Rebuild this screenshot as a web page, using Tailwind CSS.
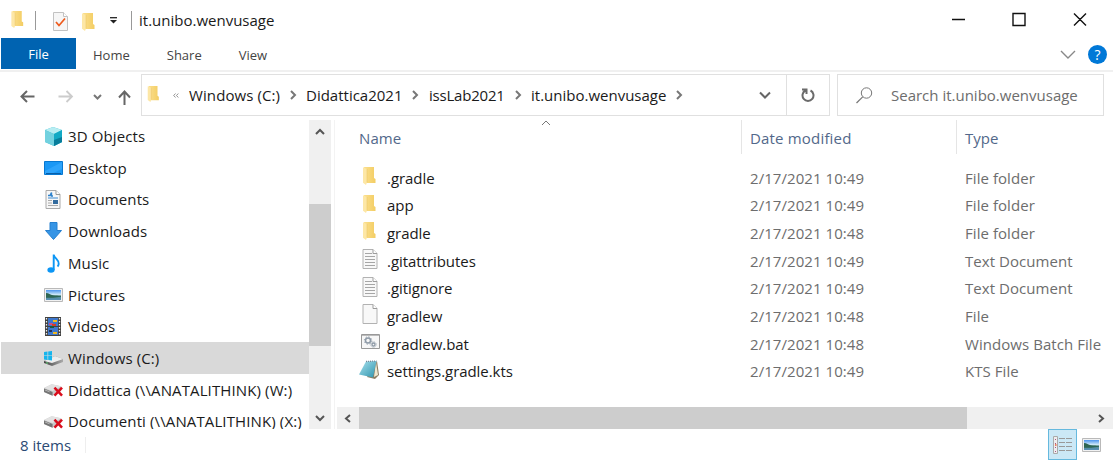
<!DOCTYPE html>
<html lang="en">
<head>
<meta charset="utf-8">
<title>it.unibo.wenvusage</title>
<script src="https://cdn.jsdelivr.net/npm/@tailwindcss/browser@4"></script>
</head>
<body class="w-[1113px] h-[461px] overflow-hidden bg-white font-['Open_Sans','Noto_Sans',sans-serif] text-[15px] text-[#1a1a1a] whitespace-nowrap">
<svg class="absolute size-0">
  <defs>
    <linearGradient id="gold" x1="0" x2="1"><stop offset="0" stop-color="#fbdf8d"/><stop offset="1" stop-color="#f3cd63"/></linearGradient>
    <linearGradient id="sky" x1="0" y1="0" x2="0" y2="1"><stop offset="0" stop-color="#4a94ee"/><stop offset=".5" stop-color="#d9effa"/><stop offset=".6" stop-color="#4e8a91"/><stop offset="1" stop-color="#5b91ba"/></linearGradient>
    <linearGradient id="note" x1="0" y1="0" x2="1" y2="1"><stop offset="0" stop-color="#a9e2ee"/><stop offset="1" stop-color="#2d93ad"/></linearGradient>
    <linearGradient id="disk" x1="0" x2="1"><stop offset="0" stop-color="#444"/><stop offset="1" stop-color="#aaa"/></linearGradient>
    <symbol id="folder" viewBox="0 0 13 18"><path d="M1 0h10v11l1.500 1v4H3z" fill="url(#gold)"/><path d="M0 .3 4 2v13.500l-1 2.500L0 15.800z" fill="#fde7a6"/><path d="M4 2v13.500" stroke="#e9c05d" stroke-width=".5"/></symbol>
    <symbol id="sheet" viewBox="0 0 16 20"><path d="M1 .5h10l4 4v15H1z" fill="#f8f8f8" stroke="#b2b2b2"/><path d="M11 .5v4h4" fill="#fff" stroke="#9c9c9c"/></symbol>
    <symbol id="text" viewBox="0 0 16 20"><use href="#sheet"/><path d="M3 4.500h7M3 7.500h10M3 10.500h10M3 13.500h10M3 16.500h10" stroke="#a6a6a6"/></symbol>
    <symbol id="picture" viewBox="0 0 19 14"><path d="M.5.500h18v13H.5z" fill="#f1f1f1" stroke="#b9b9b9"/><path d="M2 2h15v10H2z" fill="url(#sky)"/><path d="M2 5c3 0 4 2 7 2.200 3 .3 5 .5 8 .5v1c-6 1-10 1-15 1z" fill="#2e6653"/></symbol>
    <symbol id="netdisk" viewBox="0 0 20 15"><path d="M0 6 8 2l10 2v5l-9 5-9-4z" fill="#c9c9c9"/><path d="m0 6 8-4 10 2-9 5z" fill="#e3e3e3"/><path d="m0 6.500 9 3.500v4L0 10z" fill="#757575"/><path d="m1 8 5 2" stroke="#bbb"/><path d="m11 5.500 8 8.500m0-8.500L11 14" stroke="#d90d1c" stroke-width="2.600"/></symbol>
    <symbol id="crumb" viewBox="0 0 8 10"><path d="m2 1 4 4-4 4" fill="none" stroke="#777" stroke-width="2"/></symbol>
  </defs>
</svg>
<div class="flex flex-col h-[461px]">
  <!-- Title bar -->
  <header class="flex h-[38px] items-center pb-px">
    <svg class="ml-[11px] mt-0.5 w-[13px] h-[17px]"><use href="#folder"/></svg>
    <div class="ml-[11px] mt-1 w-px h-[19px] bg-[#999]"></div>
    <svg class="ml-[17px] mt-1.5 w-[15px] h-[19px]" viewBox="0 0 15 19"><path d="M.5.500h10l4 4v14H.5z" fill="#f6f6f6" stroke="#c2c2c2"/><path d="M10.500.500v4h4" fill="#fff" stroke="#c2c2c2"/><path d="m3 10 3 3.500 6-7" fill="none" stroke="#ee5a1c" stroke-width="1.700"/></svg>
    <svg class="ml-[14px] mt-1.5 w-[13px] h-[18px]"><use href="#folder"/></svg>
    <svg class="ml-[14px] mt-1 w-[9px] h-[7px]" viewBox="0 0 9 7"><path d="M1 .7h7" stroke="#222" stroke-width="1.300"/><path d="M1 3h7L4.500 6.500z" fill="#222"/></svg>
    <div class="ml-[13px] mt-1 w-px h-[19px] bg-[#999]"></div>
    <div class="ml-[7px] mt-1">it.unibo.wenvusage</div>
    <svg class="ml-auto mr-[26px] w-[136px] h-4" viewBox="0 0 136 16"><path d="M1 8.500h13M62 2.500h12v12H62zM123 2.500l12 12m0-12-12 12" fill="none" stroke="#111" stroke-width="1.400"/></svg>
  </header>
  <!-- Ribbon tabs -->
  <nav class="flex h-[34px] items-start border-b-2 border-[#f0f0f0] text-[13px] text-[#444]">
    <div class="ml-px w-[75px] h-[31px] bg-[#0063b1] text-white text-center leading-[33px]">File</div>
    <div class="ml-[17px] leading-[34px]">Home</div>
    <div class="ml-[37px] leading-[34px]">Share</div>
    <div class="ml-[37px] leading-[34px]">View</div>
    <svg class="ml-auto mt-3 w-4 h-[10px]" viewBox="0 0 16 10"><path d="m1 1 7 7 7-7" fill="none" stroke="#888" stroke-width="1.400"/></svg>
    <div class="ml-[12px] mr-[6px] mt-[7px] size-[19px] rounded-full bg-[#0078d7] text-white text-center text-[14px] leading-[19px]">?</div>
  </nav>
  <!-- Address bar -->
  <div class="flex h-12 pt-0.5">
    <div class="flex w-[141px] items-center pl-5">
      <svg class="w-[112px] h-[18px]" viewBox="0 0 112 18" fill="none"><path d="M14.500 8.500H1.500M7 3 1.500 8.500 7 14" stroke="#666" stroke-width="2"/><path d="M38.500 8.500h13M46.500 3 52 8.500l-5.500 5.500" stroke="#ccc" stroke-width="1.800"/><path d="m74 7 3.500 3.500L81 7" stroke="#777" stroke-width="2"/><path d="M104.500 17V3.500M99 9.500l5.500-6 5.500 6" stroke="#666" stroke-width="2"/></svg>
    </div>
    <div class="flex w-[689px] h-[42px] items-center border border-[#e0e0e0] pl-[5px]">
      <svg class="w-[13px] h-4 mb-0.5"><use href="#folder"/></svg>
      <svg class="ml-[13px] w-[6px] h-[5px]" viewBox="0 0 6 5"><path d="M2.500.500.700 2.500l1.800 2M5.300.500 3.500 2.500l1.800 2" fill="none" stroke="#777" stroke-width=".8"/></svg>
      <div class="ml-2.5 w-[92px] tracking-[0.1px]">Windows (C:)</div>
      <svg class="ml-[8px] w-2 h-2.5"><use href="#crumb"/></svg>
      <div class="ml-[9px] w-[97px]">Didattica2021</div>
      <svg class="ml-[8px] w-2 h-2.5"><use href="#crumb"/></svg>
      <div class="ml-[10px] w-[76px] tracking-[-0.2px]">issLab2021</div>
      <svg class="ml-[9px] w-2 h-2.5"><use href="#crumb"/></svg>
      <div class="ml-[9px] w-[136px]">it.unibo.wenvusage</div>
      <svg class="ml-[8px] w-2 h-2.5"><use href="#crumb"/></svg>
      <svg class="ml-auto mr-[15px] w-3 h-2" viewBox="0 0 12 8"><path d="m1 1.500 5 5 5-5" fill="none" stroke="#666" stroke-width="2"/></svg>
      <div class="flex w-[43px] h-full items-center justify-center border-l border-[#e0e0e0]">
        <svg class="w-[14px] h-[15px]" viewBox="0 0 14 15"><path d="M9.500 2.500a5.500 5.500 0 1 1-5 0M1 1.500h4.500V6" fill="none" stroke="#6b6b6b" stroke-width="2"/></svg>
      </div>
    </div>
    <div class="flex ml-[7px] w-[267px] h-[42px] items-center border border-[#e0e0e0] pl-[18px] text-[#6d6d6d]">
      <svg class="w-[17px] h-[17px]" viewBox="0 0 17 17"><circle cx="10.500" cy="6" r="5.200" fill="none" stroke="#777"/><path d="M6.700 9.800.500 16" stroke="#777" stroke-width="1.200"/></svg>
      <div class="ml-[18px] mt-px">Search it.unibo.wenvusage</div>
    </div>
  </div>
  <main class="flex h-[309px]">
    <!-- Navigation tree -->
    <div class="ml-px w-[308px] overflow-hidden tracking-[0.12px] [&>div]:flex [&>div]:h-[31.700px] [&>div]:items-center [&>div]:pl-[43px] [&_svg]:mr-[5px] [&_svg]:shrink-0 [&_svg]:w-[19px]">
      <div class="mt-[0.500px]"><svg class="h-[19px]" viewBox="0 0 19 19"><path d="M1 3 9 0l9 3v12l-8 4-9-4z" fill="#36bfd2"/><path d="m1 3 8-3 9 3-8 4z" fill="#b8edf2"/><path d="m1 3 9 4v12l-9-4z" fill="#72d1df"/><path d="m10 7 8-4v12l-8 4z" fill="#12a9c4"/><path d="m10 13 8-3v5l-8 4z" fill="#087d9b"/></svg><span>3D Objects</span></div>
      <div><svg class="h-[14px]" viewBox="0 0 19 14"><path d="M.5.500h18v13H.5z" fill="#1b98f5" stroke="#0878d1"/><path d="M18 1v7L7 13H1v-3z" fill="#2ea4fb"/><path d="M2 12.500h15" stroke="#075ea8"/></svg><span>Desktop</span></div>
      <div><svg class="h-[19px]" viewBox="0 0 19 19"><path d="M2 .5h10l4 4v14H2z" fill="#f7f7f7" stroke="#aaa"/><path d="M12 .5v4h4" fill="#fff" stroke="#999"/><path d="M4 5.500h2l1.500-3V6H9" fill="none" stroke="#2e82cc" stroke-width="1.400"/><path d="M4 8h10" stroke="#67a4dc" stroke-width="1.300"/><path d="M4 10.500h4M4 13h4M4 15.500h10" stroke="#aaa"/><path d="M9 10h5v4H9z" fill="#336b9e"/></svg><span>Documents</span></div>
      <div><svg class="h-[18px]" viewBox="0 0 19 18"><path d="M6 .5h7v8h4.500l-8 9-8-9H6z" fill="#3795e5" stroke="#2680d0"/></svg><span>Downloads</span></div>
      <div><svg class="h-[19px]" viewBox="0 0 19 19"><ellipse cx="7" cy="16" rx="3.600" ry="2.700" fill="#0c96f5"/><path d="M9.700 16V.5c.5 4 5.500 5 5 9.500-.1 1-.7 2-1.200 2.500" fill="none" stroke="#0c96f5" stroke-width="1.900"/></svg><span>Music</span></div>
      <div><svg class="h-[14px]"><use href="#picture"/></svg><span>Pictures</span></div>
      <div><svg class="h-[19px]" viewBox="0 0 19 19"><path d="M1 0h16v19H1z" fill="#414141"/><path d="M4 1h10v8H4zM4 10h10v8H4z" fill="#3f78cd"/><path d="M2.500 1v18M15.500 1v18" stroke="#eee" stroke-width="1.300" stroke-dasharray="1.500 1.500"/><path d="M9 3h4v2H9zM9 15h4v2H9z" fill="#f1b921"/><path d="M5 6h4v2H5z" fill="#ce4b80"/><path d="M8 7h4v2H8z" fill="#d73b28"/><path d="M6 9h4v2H6z" fill="#1a593c"/><path d="M5 13h3v2H5z" fill="#22345b"/></svg><span>Videos</span></div>
      <div class="bg-[#d9d9d9]"><svg class="h-[15px]" viewBox="0 0 19 15"><path d="m0 10 11-5 8 3v3l-11 4-8-3z" fill="url(#disk)"/><path d="m0 10 11-5 8 3-11 4z" fill="#eee"/><path d="m0 1 3.500-.5v4H0zM4.200.400 8 0v4.500H4.200zM0 5h3.500v4L0 8.500zM4.200 5H8v4.500L4.200 9z" fill="#16b5ed"/><path d="M2 12h2" stroke="#63d878"/></svg><span>Windows (C:)</span></div>
      <div><svg class="h-[15px]"><use href="#netdisk"/></svg><span>Didattica (\\ANATALITHINK) (W:)</span></div>
      <div><svg class="h-[15px]"><use href="#netdisk"/></svg><span>Documenti (\\ANATALITHINK) (X:)</span></div>
    </div>
    <div class="flex flex-col w-[22px] items-center bg-[#f0f0f0]">
      <svg class="mt-2 w-[10px] h-[7px]" viewBox="0 0 10 7"><path d="m1 6 4-4 4 4" fill="none" stroke="#555" stroke-width="2"/></svg>
      <div class="mt-[69px] w-full h-[142px] bg-[#cdcdcd]"></div>
      <svg class="mt-[69px] w-[10px] h-[7px]" viewBox="0 0 10 7"><path d="m1 1 4 4 4-4" fill="none" stroke="#555" stroke-width="2"/></svg>
    </div>
    <div class="ml-[3px] w-px bg-[#f3f3f3]"></div>
    <!-- File list -->
    <section class="flex flex-col w-[776px] ml-[2px]">
      <div class="flex h-[34px] text-[#52688a]">
        <div class="flex w-[405px] pl-[22px] pt-[7px] border-r border-[#e5e5e5]"><span class="tracking-[0.1px]">Name</span><svg class="ml-[140px] -mt-[7px] w-[10px] h-[6px]" viewBox="0 0 10 6"><path d="m1 5 4-4 4 4" fill="none" stroke="#777"/></svg></div>
        <div class="w-[215px] pl-[8px] pt-[7px] border-r border-[#e5e5e5] tracking-[0.18px]">Date modified</div>
        <div class="pl-[8px] pt-[7px]">Type</div>
      </div>
      <div class="flex flex-col h-[253px] pt-[10px] text-[#6d6d6d] [&>div]:grid [&>div]:grid-cols-[26px_363px_215px_1fr] [&>div]:items-center [&>div]:h-[27.700px] [&>div]:pl-[24px] [&_b]:font-normal [&_b]:text-[#1a1a1a] [&_b]:tracking-[-0.05px] [&_span]:tracking-[0.06px]">
        <div><svg class="ml-0.5 mb-1 w-[13px] h-[18px]"><use href="#folder"/></svg><b>.gradle</b><span>2/17/2021 10:49</span><span>File folder</span></div>
        <div><svg class="ml-0.5 mb-1 w-[13px] h-[18px]"><use href="#folder"/></svg><b>app</b><span>2/17/2021 10:49</span><span>File folder</span></div>
        <div><svg class="ml-0.5 mb-1 w-[13px] h-[18px]"><use href="#folder"/></svg><b>gradle</b><span>2/17/2021 10:48</span><span>File folder</span></div>
        <div><svg class="ml-px mb-1 w-4 h-5"><use href="#text"/></svg><b>.gitattributes</b><span>2/17/2021 10:49</span><span>Text Document</span></div>
        <div><svg class="ml-px mb-1 w-4 h-5"><use href="#text"/></svg><b>.gitignore</b><span>2/17/2021 10:49</span><span>Text Document</span></div>
        <div><svg class="ml-px mb-1 w-4 h-5"><use href="#sheet"/></svg><b>gradlew</b><span>2/17/2021 10:48</span><span>File</span></div>
        <div><svg class="mb-1 w-[19px] h-[15px]" viewBox="0 0 19 15"><path d="M.5.500h18v14H.5z" fill="#f7f7f7" stroke="#999"/><path d="M1 1.500h17" stroke="#bbb"/><circle cx="7" cy="6.500" r="2.500" fill="none" stroke="#8e9aa7" stroke-width="1.500"/><circle cx="7" cy="6.500" r="3.700" fill="none" stroke="#8e9aa7" stroke-dasharray="1.300 1.600"/><circle cx="12.500" cy="10.500" r="1.500" fill="none" stroke="#8e9aa7" stroke-width="1.300"/><circle cx="12.500" cy="10.500" r="2.700" fill="none" stroke="#8e9aa7" stroke-dasharray="1 1.100"/></svg><b>gradlew.bat</b><span>2/17/2021 10:48</span><span>Windows Batch File</span></div>
        <div><svg class="-ml-0.5 mb-1 w-[21px] h-[19px]" viewBox="0 0 21 19"><path d="m18 1 2 14-4 4-8-2z" fill="#8b7c60"/><path d="m17 2 2 13-4 2z" fill="#eee7cf"/><path d="M7 1.500 17.500 1 14 17.500 0 14.500z" fill="url(#note)"/><path d="m7 1.500 10.500-.5" stroke="#789" stroke-width="1.300" stroke-dasharray="1 1"/></svg><b>settings.gradle.kts</b><span>2/17/2021 10:49</span><span>KTS File</span></div>
      </div>
      <div class="flex h-[22px] items-center bg-[#f0f0f0]">
        <svg class="ml-[7px] w-[7px] h-[9px]" viewBox="0 0 7 9"><path d="m6 1-4 3.500L6 8" fill="none" stroke="#555" stroke-width="2"/></svg>
        <div class="ml-2 w-[608px] h-full bg-[#cdcdcd]"></div>
        <svg class="ml-auto mr-[8px] w-[7px] h-[9px]" viewBox="0 0 7 9"><path d="m1 1 4 3.500L1 8" fill="none" stroke="#555" stroke-width="2"/></svg>
      </div>
    </section>
  </main>
  <!-- Status bar -->
  <footer class="flex h-8 items-center text-[#2b4a73]">
    <div class="ml-5 w-[65px]">8 items</div>
    <div class="w-px h-4 bg-[#eee]"></div>
    <div class="flex ml-auto mb-px w-[29px] h-[31px] items-center justify-center border border-[#66b9de] bg-[#cbe8f6]">
      <svg class="w-[19px] h-[18px]" viewBox="0 0 19 18"><path d="M.5.500h4v17h-4z" fill="#eee" stroke="#aaa"/><path d="M2 3.500h1M2 7.500h1M2 11.500h1M2 15.500h1" stroke="#a58"/><path d="M2 9h1.500" stroke="#e65d32" stroke-width="1.500"/><path d="M6 2.500h6m1 0h6m-13 4h6m1 0h6m-13 4h6m1 0h6m-13 4h6m1 0h6" stroke="#999"/></svg>
    </div>
    <svg class="ml-[5px] mr-[12px] w-[19px] h-[14px]"><use href="#picture"/></svg>
  </footer>
</div>
</body>
</html>
